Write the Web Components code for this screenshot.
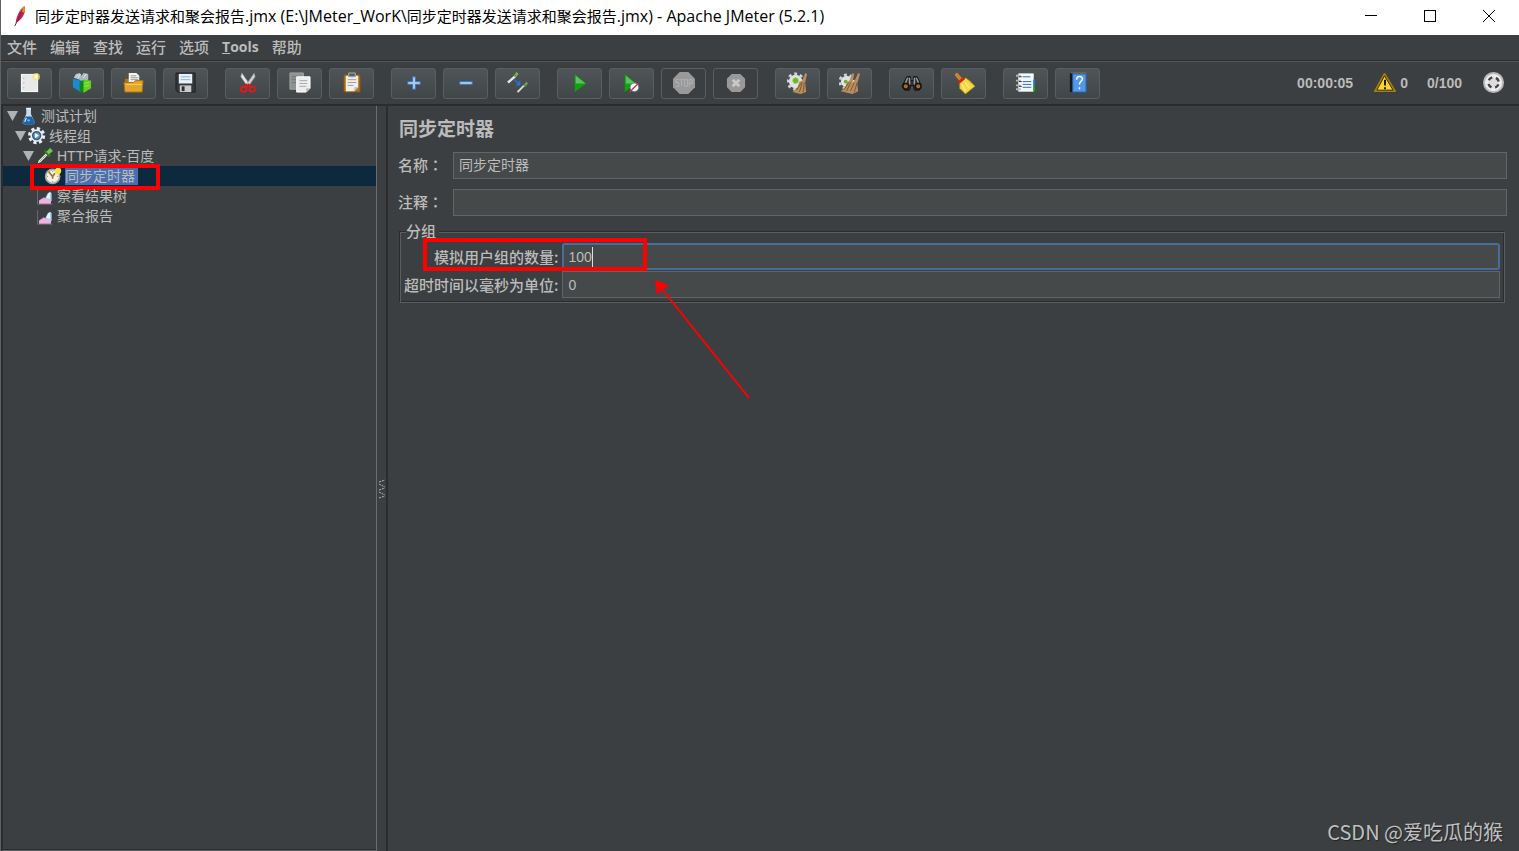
<!DOCTYPE html>
<html lang="zh-CN">
<head>
<meta charset="utf-8">
<title>Apache JMeter (5.2.1)</title>
<style>
html, body { height: 100%; margin: 0; }
body {
  background: #3c3f41; color: #bbbbbb; overflow: hidden;
  font-family: "Liberation Sans", "Noto Sans CJK SC", sans-serif;
  --line-dark: #2a2c2d; --line-light: #5b5e60; --field: #45494a; --field-line: #646464; --mark: #ff0000;
}
</style>
</head>
<body>
<jm-app></jm-app>
<script>
const ICONS = {
  feather: '<path d="M7 19c0-4 2-9 5-14l4-4c2 4 0 9-3 13l-3 3z" fill="#c4214b"/><path d="M11 6l5-5c1 3 1 5 0 7z" fill="#f28a22"/><path d="M9 17l5-13" stroke="#6d2273" stroke-width="1"/><path d="M6 22l2-4" stroke="#335" stroke-width="1"/>',
  blank: '<rect x="2.500" y="2.500" width="17" height="18" fill="#e9e9e9" stroke="#fff"/><path d="M5 6v1M5 11v1M5 16v1" stroke="#999" stroke-width="1"/><circle cx="18" cy="5" r="4" fill="#f3e46c" opacity=".7"/><circle cx="18" cy="5" r="2" fill="#fffbd0"/>',
  templates: '<path d="M2 7l8 2v12l-8-5z" fill="#198bd0"/><path d="M10 7h7v6h-7z" fill="#54b8e8"/><path d="M3 6l2-4 4-1 2 3 2-3 5 1v6l-7 1z" fill="#aab9bd"/><path d="M4 6l4-4M7 7l3-5M13 6l3-4" stroke="#eef" stroke-width="1"/><path d="M9 10l5-2v12l-5 2z" fill="#12851e"/><path d="M13 8l8 1v8l-8 5z" fill="#62cf20"/><path d="M14 12l5-1M14 15l5-1" stroke="#9bea61"/>',
  open: '<path d="M2 7h6l2 2h10v11H2z" fill="#b07411"/><path d="M6 1h8l3 3v10H6z" fill="#f4f4f4"/><path d="M8 4h6M8 6h8M8 8h8" stroke="#999"/><path d="M1 11h10l2-2h8l-1 12H2z" fill="#e4a629" stroke="#a76f14"/><path d="M3 13h17" stroke="#f8cf69"/>',
  save: '<path d="M1 1h20v20H3l-2-2z" fill="#34383b" stroke="#1c1f21"/><rect x="4" y="2" width="14" height="10" fill="#e8f1fa"/><path d="M6 5h10M6 8h10" stroke="#8ab0d6"/><rect x="5" y="14" width="12" height="7" fill="#c9ccce"/><rect x="7" y="15" width="3" height="5" fill="#292d30"/>',
  cut: '<path d="M5 1l9 13-3 1L4 5z" fill="#e8e8e8" stroke="#999" stroke-width=".6"/><path d="M18 1L9 14l3 1 7-10z" fill="#d0d0d0" stroke="#888" stroke-width=".6"/><path d="M11 13l-3 3M11 13l4 3" stroke="#d01818" stroke-width="3"/><ellipse cx="7" cy="18" rx="3" ry="2.500" fill="none" stroke="#e31919" stroke-width="2"/><ellipse cx="16" cy="18" rx="3" ry="2.500" fill="none" stroke="#e31919" stroke-width="2"/>',
  copy: '<path d="M1 1h14v17H1z" fill="#8d9192" stroke="#a4a7a7"/><path d="M3 5h9M3 8h9M3 11h5" stroke="#737879"/><path d="M8 5h14v12l-4 4H8z" fill="#eceded" stroke="#fff"/><path d="M11 9h8M11 12h8M11 15h7" stroke="#a5a9a9"/><path d="M18 21v-4h4z" fill="#bbb"/>',
  paste: '<rect x="3" y="3" width="17" height="18" rx="1" fill="#b2711b" stroke="#85500e"/><path d="M5 4h13v12l-4 4H5z" fill="#f0f0e9"/><path d="M8 1h7v4H8z" fill="#5d625a" stroke="#aaa"/><path d="M7 8h9M7 11h9M7 14h6" stroke="#999"/><path d="M14 20v-4h4z" fill="#b8b8b8"/>',
  plus: '<path d="M10 5h3v5h5v3h-5v5h-3v-5H5v-3h5z" fill="#a9cdf2" stroke="#3777bd" stroke-width="1"/>',
  minus: '<path d="M5 10h13v3H5z" fill="#a9cdf2" stroke="#3777bd" stroke-width="1"/>',
  toggle: '<path d="M1 11l8-7" stroke="#e6e9e5" stroke-width="2.500"/><path d="M8 5l3-4" stroke="#78b35a" stroke-width="3"/><path d="M7 2l3 3" stroke="#4a7d35" stroke-width="1"/><path d="M11 21l7-7" stroke="#dadeda" stroke-width="2"/><path d="M18 15l3-4" stroke="#6ba955" stroke-width="2.500"/><path d="M17 12l3 3" stroke="#4a7d35" stroke-width="1"/><path d="M8 8l4 4" stroke="#2a6fd5" stroke-width="1.500"/><path d="M14 8v6H9z" fill="#2a6fd5"/>',
  start: '<path d="M6 2v19l12-9z" fill="#0da30d"/><path d="M7 4v8h10z" fill="#62bf62"/>',
  startNow: '<path d="M4 2v19l12-9z" fill="#0da30d"/><path d="M5 4v8h10z" fill="#62bf62"/><circle cx="14" cy="16" r="4.500" fill="#fff" stroke="#4485b7" stroke-width="1"/><path d="M9 21l9-9" stroke="#e03030" stroke-width="1.500"/>',
  stop: '<path d="M7 0h9l7 7v9l-7 7H7l-7-7V7z" fill="#999"/><path d="M6 8H3v3h3v4H3M7 8h4M9 8v7M12 8h3v7h-3zM17 15V8h3v4h-3" fill="none" stroke="#b5b5b5" stroke-width="1"/>',
  shutdown: '<path d="M7 2h9l5 5v9l-5 5H7l-5-5V7z" fill="#999"/><path d="M8 8l7 7M15 8l-7 7" stroke="#c9c9c9" stroke-width="3"/>',
  clear: '<circle cx="9" cy="10" r="7" fill="#e1e3e3"/><circle cx="9" cy="10" r="8" fill="none" stroke="#d1d4d4" stroke-width="3" stroke-dasharray="3 3"/><circle cx="9" cy="9" r="3" fill="#67b529" stroke="#99d264"/><path d="M13 10l3-1 3-8 2 1-2 9 1 10-6 2-8-2 5-5z" fill="#b88d61"/><path d="M10 19l5-8M13 21l3-10M17 21l1-10" stroke="#80582f" stroke-width="1"/>',
  clearAll: '<circle cx="8" cy="10" r="6" fill="#e1e3e3"/><circle cx="8" cy="10" r="7" fill="none" stroke="#d1d4d4" stroke-width="3" stroke-dasharray="3 3"/><circle cx="7" cy="10" r="2" fill="#67b529"/><path d="M8 11l3-2 3-8 2 1-2 9 2-1 4-9 2 1-3 10 1 8-6 3-12-3 5-5z" fill="#b88d61"/><path d="M5 19l5-8M8 20l4-9M12 20l4-9M16 21l3-10" stroke="#80582f" stroke-width="1"/>',
  search: '<path d="M6 5h4v4h3V5h4l4 9-2 5h-5l-1-5h-3l-1 5H4l-3-4z" fill="#303335" stroke="#111"/><path d="M7 6l-3 7M16 6l3 7M9 6v7M14 6v7" stroke="#9a9da0" stroke-width="1.500"/><circle cx="5" cy="15" r="3" fill="#b5652c" stroke="#111" stroke-width="1.500"/><circle cx="18" cy="15" r="3" fill="#b5652c" stroke="#111" stroke-width="1.500"/>',
  broom: '<path d="M4 3l5 6" stroke="#ca8623" stroke-width="4" stroke-linecap="round"/><path d="M7 12l6-6 4 3 6 6-10 8-6-6z" fill="#f1d946" stroke="#a88910" stroke-width=".8"/><path d="M6 11l6-5" stroke="#dd1e18" stroke-width="3"/><path d="M9 12l4 8M12 10l5 7" stroke="#fff3a1"/>',
  functions: '<rect x="4" y="2" width="15" height="18" fill="#f3f5f7" stroke="#fff"/><path d="M19 8h2v6h-2z" fill="#2474d8"/><path d="M19 14h2v6h-2z" fill="#11a51e"/><path d="M8 5h8M8 10h9M8 13h9M8 16h9" stroke="#286cae"/><path d="M1 4h5M1 9h5M1 14h5M1 18h5" stroke="#b4b7b8" stroke-width="2"/><path d="M4 5h3M4 10h3M4 15h3" stroke="#222"/>',
  help: '<path d="M3 1h3v20H3z" fill="#15191d"/><path d="M6 2h14v19H6z" fill="#5598e6" stroke="#2260a8"/><path d="M4 1h16" stroke="#777"/><path d="M10 8c0-5 7-4 6 0-1 2-3 2-3 5M13 16v2" fill="none" stroke="#fff" stroke-width="1.500"/>',
  warning: '<path d="M11 2L1 20h21z" fill="#ffd51d" stroke="#a48300" stroke-width="2" stroke-linejoin="round"/><path d="M11 4L3 19h17z" fill="#ffd51d" stroke="#222" stroke-width="1"/><path d="M11.500 8v6M11.500 16v2" stroke="#111" stroke-width="2"/>',
  remote: '<circle cx="11" cy="11" r="11" fill="#b9b9b9"/><circle cx="11" cy="11" r="9" fill="#eee"/><circle cx="11" cy="11" r="5.500" fill="#ddd" stroke="#444" stroke-width="2.500" stroke-dasharray="4.640 4" stroke-dashoffset="-2"/>',
  flask: '<path d="M8 1h6v8l5 11-2 2H5l-2-2 5-11z" fill="#c9dce9"/><path d="M7 12h8l4 8-2 2H5l-2-2z" fill="#1b65ac"/><path d="M8 2h6M8 14l-2 5" stroke="#edf6ff" stroke-width="1.500"/><circle cx="11" cy="17" r="1.500" fill="#71b7ed"/>',
  gear: '<circle cx="11" cy="11" r="8" fill="#e7edf3"/><circle cx="11" cy="11" r="9" fill="none" stroke="#e7edf3" stroke-width="4" stroke-dasharray="4 3.070"/><circle cx="11" cy="11" r="5" fill="#6798c6" stroke="#375e87" stroke-width="2"/><path d="M9 8l5 3-5 3z" fill="#fff"/>',
  pipette: '<path d="M1 22L3 17 13 7l3 3-10 10z" fill="#dfe5df" stroke="#1a1c1c"/><path d="M5 18l8-8" stroke="#80a077"/><path d="M11 5l7 7" stroke="#367523" stroke-width="3"/><path d="M13 6l5-5 4 4-6 5z" fill="#7cc35d" stroke="#367523"/>',
  clock: '<circle cx="11" cy="12" r="9" fill="#f3f1ea" stroke="#aaa59c" stroke-width="2"/><path d="M6 6l5 6 3-4M11 12v3" fill="none" stroke="#8e7429" stroke-width="2"/><path d="M11 5v1M4 12h1M17 12h1M11 18v1" stroke="#555"/><circle cx="18" cy="5" r="4" fill="#ffe23e"/>',
  chart: '<path d="M2 4v18h19" fill="none" stroke="#777"/><path d="M4 21v-4l6-4 3 2 6-3v9z" fill="#ef8ed1"/><path d="M12 14l3-6 3-2 2 2v10l-6 2z" fill="#a9cef3"/><path d="M13 14l3-6 2-1v8z" fill="#eef4ff"/><path d="M4 21v-3l7-4 4 3 4 1v3z" fill="#f3b3df"/>'
};

function define(name, html, setup) {
  customElements.define(name, class extends HTMLElement {
    connectedCallback() {
      if (this.shadowRoot) return;
      const root = this.attachShadow({ mode: 'open' });
      const t = document.createElement('template');
      t.innerHTML = typeof html === 'function' ? html(this) : html;
      root.append(t.content.cloneNode(true));
      if (setup) setup(this, root);
    }
  });
}

define('jm-icon', el => `
<style>:host{display:inline-flex;flex:none;width:22px;height:22px} svg{width:100%;height:100%;display:block}</style>
<svg viewBox="0 0 23 23" fill="none" aria-hidden="true">${ICONS[el.getAttribute('name')]}</svg>`);

define('jm-titlebar', `
<style>
:host{display:flex;align-items:center;height:35px;padding-right:1px;background:#fff;color:#000;
  font:16px "Open Sans","Noto Sans CJK SC",sans-serif}
jm-icon{margin:0 4px 3px 8px}
h1{flex:1;margin:0;font:inherit;line-height:20px;padding-bottom:4px;white-space:nowrap}
::slotted(span){font:15px/20px "Noto Sans CJK SC",sans-serif}
button{width:59px;height:32px;padding:0 0 3px;border:0;background:none;display:grid;place-items:center}
svg{width:12px;height:12px;shape-rendering:crispEdges}
</style>
<jm-icon name="feather"></jm-icon>
<h1><slot></slot></h1>
<button aria-label="最小化"><svg viewBox="0 0 12 12"><path d="M0 5.500h12" stroke="#000"/></svg></button>
<button aria-label="最大化"><svg viewBox="0 0 12 12"><rect x=".5" y=".5" width="11" height="11" fill="none" stroke="#000"/></svg></button>
<button aria-label="关闭"><svg viewBox="0 0 12 12" style="shape-rendering:auto"><path d="M0 0l12 12M12 0L0 12" stroke="#000"/></svg></button>`);

define('jm-menubar', `
<style>
:host{display:block;border-bottom:1px solid var(--line-dark);box-shadow:0 1px 0 #5a5652}
nav{display:flex;gap:13px;height:23px;padding:0 6px 2px;align-items:center}
button{border:0;padding:0;background:none;color:#bbb;font:500 15px/20px "Noto Sans CJK SC",sans-serif}
.latin{font:bold 14px/20px "Open Sans",sans-serif}
</style>
<nav><button>文件</button><button>编辑</button><button>查找</button><button>运行</button><button>选项</button><button class="latin"><u>T</u>ools</button><button>帮助</button></nav>`);

define('jm-tool', el => `
<style>
:host{display:block}
button{display:grid;place-items:center;width:45px;height:31px;padding:0 0 1px;border:1px solid #5b5e60;border-radius:3px;
  background:linear-gradient(#4f5557,#414648)}
button:disabled{background:none}
</style>
<button aria-label="${el.getAttribute('label')}" ${el.hasAttribute('disabled') ? 'disabled' : ''}><jm-icon name="${el.getAttribute('icon')}"></jm-icon></button>`);

const TOOLS = [
  [['blank','新建'],['templates','模板'],['open','打开'],['save','保存']],
  [['cut','剪切'],['copy','复制'],['paste','粘贴']],
  [['plus','展开'],['minus','收起'],['toggle','切换']],
  [['start','启动'],['startNow','不停顿启动'],['stop','停止',1],['shutdown','关闭',1]],
  [['clear','清除'],['clearAll','清除全部']],
  [['search','搜索'],['broom','重置搜索']],
  [['functions','函数助手'],['help','帮助']]
];
define('jm-toolbar', `
<style>
:host{display:flex;align-items:center;height:31px;padding:7px 14px 5px 6px;border-bottom:2px solid var(--line-dark);font:bold 14px/20px "Liberation Sans",sans-serif}
.groups{display:flex;gap:17px;flex:1}
.group{display:flex;gap:7px}
.status{display:flex;align-items:center;padding-bottom:2px}
.warn{display:flex;align-items:center;gap:4px;margin:0 19px 0 21px}
.remote{margin-left:21px}
</style>
<div class="groups">${TOOLS.map(g => `<div class="group">${g.map(([i, l, d]) => `<jm-tool icon="${i}" label="${l}" ${d ? 'disabled' : ''}></jm-tool>`).join('')}</div>`).join('')}</div>
<div class="status"><span>00:00:05</span><span class="warn"><jm-icon name="warning"></jm-icon>0</span><span>0/100</span><jm-icon class="remote" name="remote"></jm-icon></div>`);

define('jm-node', el => `
<style>
:host{display:block}
.row{position:relative;display:flex;align-items:center;height:20px;padding-left:calc(4px + var(--depth) * 8px);
  font:14px/18px "Liberation Sans","Noto Sans CJK SC",sans-serif}
:host([selected]) .row{background:#0d293e}
:host([selected]) .text{background:#4b6eaf}
.arrow{flex:none;width:11px;height:10px;margin-right:2px;background:#afb1b3;clip-path:polygon(0 0,100% 0,50% 100%)}
:host([leaf]) .arrow{visibility:hidden}
jm-icon{width:18px;height:18px;margin-right:3px}
.text{padding-right:3px;white-space:nowrap}
.mark{position:absolute;left:27px;top:-2px;width:122px;height:18px;border:4px solid var(--mark)}
</style>
<div class="row"><span class="arrow"></span><jm-icon name="${el.getAttribute('icon')}"></jm-icon><span class="text">${el.getAttribute('label')}</span>${el.hasAttribute('selected') ? '<span class="mark"></span>' : ''}</div>
<slot></slot>`, el => el.style.setProperty('--depth', el.getAttribute('depth')));

define('jm-tree', `
<style>
:host{display:block;box-sizing:border-box;border-left:2px solid var(--line-dark);border-right:1px solid #6b6e70;border-bottom:1px solid #5b5e60;box-shadow:inset 0 -1px 0 var(--line-dark)}
</style>
<jm-node depth="0" icon="flask" label="测试计划">
  <jm-node depth="1" icon="gear" label="线程组">
    <jm-node depth="2" icon="pipette" label="HTTP请求-百度">
      <jm-node depth="3" icon="clock" label="同步定时器" leaf selected></jm-node>
    </jm-node>
    <jm-node depth="2" icon="chart" label="察看结果树" leaf></jm-node>
    <jm-node depth="2" icon="chart" label="聚合报告" leaf></jm-node>
  </jm-node>
</jm-node>`);

define('jm-divider', `
<style>
:host{display:flex;align-items:center;justify-content:center;border-right:2px solid var(--line-dark)}
svg{width:6px;height:20px;margin-top:20px}
</style>
<svg viewBox="0 0 6 20" stroke="#b5b5b5"><path d="M0 3l6-2M0 5l6 3M0 11l6-2M0 13l6 3M0 19l6-2" stroke-dasharray="2 1"/></svg>`);

define('jm-form', `
<style>
:host{display:block;padding:10px 12px 0 10px}
h2{margin:0 0 12px 1px;font:bold 19px/24px "Noto Sans CJK SC",sans-serif}
label,legend{font:500 15px/20px "Noto Sans CJK SC",sans-serif;white-space:nowrap}
.colon{font-family:"Noto Sans CJK TC",sans-serif}
.fields{display:grid;gap:10px;margin-bottom:5px}
.field{display:grid;grid-template-columns:45px 1fr;gap:10px;align-items:center}
.field label{padding-bottom:2px}
input{box-sizing:border-box;width:100%;height:27px;margin:0;padding:0 5px;border:1px solid var(--field-line);border-radius:0;background:var(--field);color:#bbb;
  font:14px/20px "Liberation Sans","Noto Sans CJK SC",sans-serif;outline:0}
.field input{padding-bottom:4px}
fieldset{margin:0 2px 0 1px;padding:2px 4px 4px;min-width:0;border:1px solid;border-color:#2a2c2d #5b5e60 #5b5e60 #2a2c2d;
  box-shadow:inset 1px 1px 0 #5b5e60,inset -1px -1px 0 #2a2c2d}
legend{margin-left:2px;padding:0 3px 0 0;height:20px;background:#3c3f41}
.grid{display:grid;grid-template-columns:max-content 1fr;gap:1px 4px;align-items:center}
.grid label{text-align:right}
.cell{position:relative;display:block}
.active{z-index:1}
.active input{border:2px solid #466d9e;border-radius:3px;padding-left:4px}
.caret{position:absolute;left:30px;top:4px;width:1px;height:20px;background:#ddd}
.mark{position:absolute;left:-139px;top:-5px;width:216px;height:25px;border:4px solid var(--mark)}
.arrow{position:absolute;left:93px;top:37px;width:98px;height:121px;overflow:visible}
</style>
<h2>同步定时器</h2>
<div class="fields">
<div class="field"><label for="name">名称<span class="colon" lang="zh-TW">：</span></label><input id="name" value="同步定时器"></div>
<div class="field"><label for="note">注释<span class="colon" lang="zh-TW">：</span></label><input id="note"></div>
</div>
<fieldset><legend>分组</legend>
<div class="grid">
<label for="users">模拟用户组的数量:</label>
<span class="cell active"><input id="users" value="100"><span class="caret"></span><span class="mark"></span>
<svg class="arrow" viewBox="0 0 98 121"><path d="M7 9l87 109" stroke="#f00" stroke-width="2"/><path d="M0 0l14 5-12 9z" fill="#f00"/></svg></span>
<label for="timeout">超时时间以毫秒为单位:</label>
<span class="cell"><input id="timeout" value="0"></span>
</div></fieldset>`);

define('jm-watermark', `
<style>:host{position:absolute;right:16px;bottom:6px;color:#bfc0c1;font:20px/26px "Noto Sans CJK SC",sans-serif;text-shadow:1px 1px 1px #222}</style><slot></slot>`);

define('jm-app', `
<style>
:host{position:relative;box-sizing:border-box;display:flex;flex-direction:column;height:100%;border-left:1px solid #5f6264}
main{flex:1;min-height:0;display:grid;grid-template-columns:376px 11px 1fr}
</style>
<jm-titlebar><span>同步定时器发送请求和聚会报告</span>.jmx (E:\\JMeter_WorK\\<span>同步定时器发送请求和聚会报告</span>.jmx) - Apache JMeter (5.2.1)</jm-titlebar>
<jm-menubar></jm-menubar>
<jm-toolbar></jm-toolbar>
<main><jm-tree></jm-tree><jm-divider></jm-divider><jm-form></jm-form></main>
<jm-watermark>CSDN @爱吃瓜的猴</jm-watermark>`);
</script>
</body>
</html>
